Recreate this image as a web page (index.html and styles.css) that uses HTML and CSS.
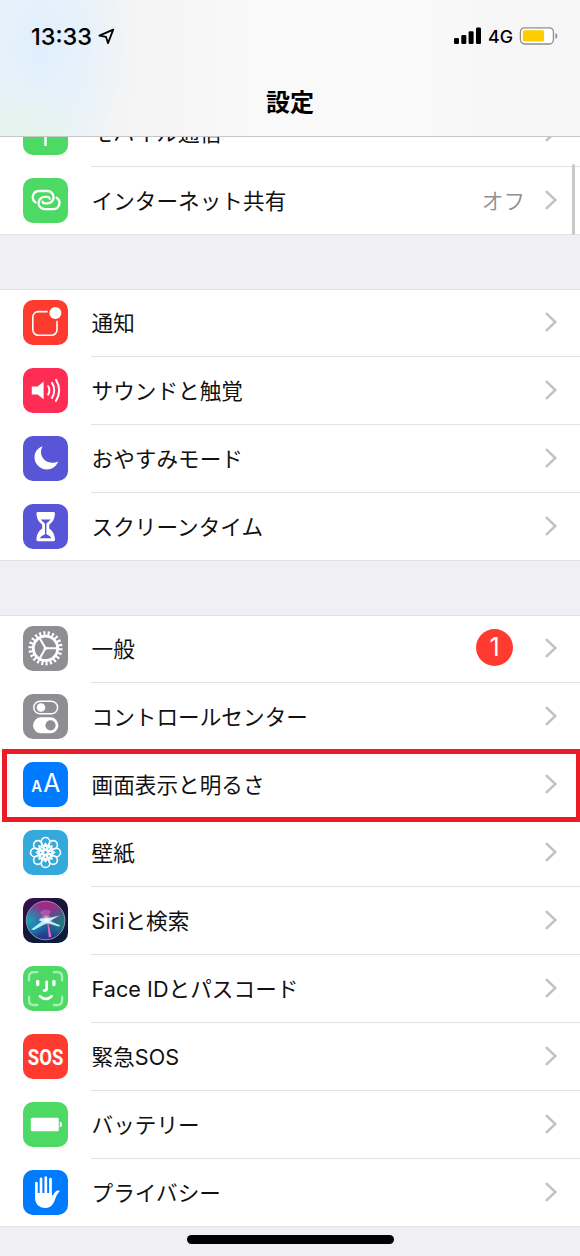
FILE: index.html
```html
<!DOCTYPE html>
<html lang="ja">
<head>
<meta charset="utf-8">
<title>設定</title>
<link rel="stylesheet" href="styles.css">
</head>
<body>
<svg class="defs" width="0" height="0" aria-hidden="true">
  <symbol id="chev" viewBox="0 0 14 22"><path d="M2 2.2 11.3 11 2 19.8" fill="none" stroke="#c2c2c6" stroke-width="2.5"/></symbol>
</svg>
<div class="screen">
  <header class="header">
    <div class="status">
      <div class="clock">
        <span class="time">13:33</span>
        <svg class="loc" width="17" height="17" viewBox="0 0 17 17"><path d="M15.2 1.6 1.4 7.6 8 8.8 10 15.2Z" fill="none" stroke="#000" stroke-width="1.8" stroke-linejoin="round"/></svg>
      </div>
      <div class="signal">
        <svg width="28" height="18" viewBox="0 0 28 18"><rect x="0" y="11" width="5" height="6" rx="1.2"/><rect x="7.3" y="8" width="5" height="9" rx="1.2"/><rect x="14.6" y="4.3" width="5" height="12.7" rx="1.2"/><rect x="22" y=".5" width="5" height="16.5" rx="1.2"/></svg>
        <span class="net">4G</span>
        <svg width="39" height="18" viewBox="0 0 39 18"><rect x="1.4" y=".8" width="33" height="16.2" rx="4.2" fill="#fff" stroke="#8e8e90" stroke-width="1.3"/><rect x="3.8" y="3.2" width="21.3" height="11.4" rx="1.6" fill="#fc0"/><path d="M36.4 5.9q2 1 2 3t-2 3Z" fill="#8e8e90"/></svg>
      </div>
    </div>
    <h1 class="title">設定</h1>
  </header>

  <main class="list">
    <section class="group first">
      <div class="row">
        <svg class="icon" viewBox="0 0 45 45"><rect width="45" height="45" rx="10" fill="#4cd964"/><path d="M22.5 20v16" stroke="#fff" stroke-width="2.4"/></svg>
        <div class="cell"><span class="label">モバイル通信</span><svg class="chev"><use href="#chev"/></svg></div>
      </div>
      <div class="row">
        <svg class="icon" viewBox="0 0 45 45"><rect width="45" height="45" rx="10" fill="#4cd964"/><g fill="none" stroke="#fff" stroke-width="2.3" stroke-linecap="round"><path d="M12.6 24.4A6.2 6.2 0 0 1 16 13H24.4A6.2 6.2 0 0 1 24.4 25.4H22.2Q19.8 25.2 19.6 23.6"/><path d="M33.6 19.8A6.2 6.2 0 0 1 30 31.2H21.8A6.2 6.2 0 0 1 21.8 18.8H24.2Q26.4 19 26.7 20.6"/></g></svg>
        <div class="cell"><span class="label">インターネット共有</span><span class="value">オフ</span><svg class="chev"><use href="#chev"/></svg></div>
      </div>
    </section>

    <section class="group">
      <div class="row">
        <svg class="icon" viewBox="0 0 45 45"><rect width="45" height="45" rx="10" fill="#ff3b30"/><rect x="9.8" y="11.6" width="24.2" height="23.6" rx="5.5" fill="none" stroke="#fff" stroke-width="1.6"/><circle cx="32.4" cy="13" r="8" fill="#ff3b30"/><circle cx="32.4" cy="13" r="6" fill="#fff"/></svg>
        <div class="cell"><span class="label">通知</span><svg class="chev"><use href="#chev"/></svg></div>
      </div>
      <div class="row">
        <svg class="icon" viewBox="0 0 45 45"><rect width="45" height="45" rx="10" fill="#ff2d55"/><path d="M8.8 18.4h5.8L20.6 13.6v17.6L14.6 26.4H8.8Z" fill="#fff"/><g fill="none" stroke="#fff" stroke-width="2" stroke-linecap="round"><path d="M25.2 18.2q2.4 4.2 0 8.4"/><path d="M29 14.8q4.6 7.6 0 15.2"/><path d="M33 11.8q6.4 10.6 0 21.2"/></g></svg>
        <div class="cell"><span class="label">サウンドと触覚</span><svg class="chev"><use href="#chev"/></svg></div>
      </div>
      <div class="row">
        <svg class="icon" viewBox="0 0 45 45"><rect width="45" height="45" rx="10" fill="#5856d6"/><path d="M19.7 10.2C13.8 12.2 11.5 16.8 11.5 21.3 11.5 28 17 33.5 23.8 33.5 29 33.5 33.4 30.4 35.2 25.5 32.8 26.6 30.8 27 28.6 26.7 22.5 26.3 18 21.8 18 16 18 13.8 18.6 12 19.7 10.2Z" fill="#fff"/></svg>
        <div class="cell"><span class="label">おやすみモード</span><svg class="chev"><use href="#chev"/></svg></div>
      </div>
      <div class="row">
        <svg class="icon" viewBox="0 0 45 45"><rect width="45" height="45" rx="10" fill="#5856d6"/><path d="M14.8 8H30.6Q32.2 8 32 9.7C31.6 14.8 29.8 18 26.2 20.7V24.5C29.8 27 31.6 30.2 32 35.5Q32.2 37.2 30.6 37.2H14.8Q13.2 37.2 13.4 35.5C13.8 30.2 15.6 27 19.2 24.5V20.7C15.6 18 13.8 14.8 13.4 9.7Q13.2 8 14.8 8Z" fill="#fff"/><path d="M17.8 15.4H27.6C26.4 17.4 23.4 18.4 23.4 20.4V30.2C25.2 31.3 27.5 31.6 28.4 34.3H17C17.9 31.6 20.2 31.3 22 30.2V20.4C22 18.4 19 17.4 17.8 15.4Z" fill="#5856d6"/></svg>
        <div class="cell"><span class="label">スクリーンタイム</span><svg class="chev"><use href="#chev"/></svg></div>
      </div>
    </section>

    <section class="group">
      <div class="row">
        <svg class="icon" viewBox="0 0 45 45"><rect width="45" height="45" rx="10" fill="#8e8e93"/><circle cx="22.5" cy="22.3" r="15" fill="none" stroke="#fff" stroke-width="4.2" stroke-dasharray="2.2 2.3" pathLength="99"/><circle cx="22.5" cy="22.3" r="12.2" fill="none" stroke="#fff" stroke-width="2.8"/><g stroke="#fff" stroke-width="2"><path d="M22.5 22.3H35M22.5 22.3 16.3 11.5M22.5 22.3 16.3 33.1"/></g><circle cx="22.5" cy="22.3" r="1.8" fill="#fff"/></svg>
        <div class="cell"><span class="label">一般</span><span class="badge">1</span><svg class="chev"><use href="#chev"/></svg></div>
      </div>
      <div class="row">
        <svg class="icon" viewBox="0 0 45 45"><rect width="45" height="45" rx="10" fill="#8e8e93"/><rect x="10.8" y="7.2" width="23.8" height="12.6" rx="6.3" fill="none" stroke="#fff" stroke-width="1.5"/><circle cx="18" cy="13.5" r="4.3" fill="#fff"/><rect x="10" y="23.3" width="25.4" height="16" rx="8" fill="#fff"/><circle cx="27.5" cy="31.3" r="5.1" fill="#8e8e93"/></svg>
        <div class="cell"><span class="label">コントロールセンター</span><svg class="chev"><use href="#chev"/></svg></div>
      </div>
      <div class="row marked">
        <svg class="icon" viewBox="0 0 45 45"><rect width="45" height="45" rx="10" fill="#007aff"/><g class="glyph-aa"><text x="8.3" y="30" font-size="16" font-weight="600" textLength="10.8" lengthAdjust="spacingAndGlyphs">A</text><text x="20.2" y="30" font-size="25" textLength="17" lengthAdjust="spacingAndGlyphs">A</text></g></svg>
        <div class="cell"><span class="label">画面表示と明るさ</span><svg class="chev"><use href="#chev"/></svg></div>
      </div>
      <div class="row">
        <svg class="icon" viewBox="0 0 45 45"><rect width="45" height="45" rx="10" fill="#34aadc"/><g fill="none" stroke="#fff" stroke-width="1.6"><circle cx="22.5" cy="11.8" r="4.3"/><circle cx="30.1" cy="14.9" r="4.3"/><circle cx="33.2" cy="22.5" r="4.3"/><circle cx="30.1" cy="30.1" r="4.3"/><circle cx="22.5" cy="33.2" r="4.3"/><circle cx="14.9" cy="30.1" r="4.3"/><circle cx="11.8" cy="22.5" r="4.3"/><circle cx="14.9" cy="14.9" r="4.3"/><circle cx="22.5" cy="22.5" r="2.2"/><g id="petals"><path d="M22.5 20Q19.2 17 22.5 13.5 25.8 17 22.5 20Z"/><path d="M22.5 25Q19.2 28 22.5 31.5 25.8 28 22.5 25Z"/><path d="M20 22.5Q17 19.2 13.5 22.5 17 25.8 20 22.5Z"/><path d="M25 22.5Q28 19.2 31.5 22.5 28 25.8 25 22.5Z"/></g><use href="#petals" transform="rotate(45 22.5 22.5)"/></g></svg>
        <div class="cell"><span class="label">壁紙</span><svg class="chev"><use href="#chev"/></svg></div>
      </div>
      <div class="row">
        <svg class="icon" viewBox="0 0 45 45">
          <defs>
            <linearGradient id="sbg" x1="0" y1="0" x2=".8" y2="1"><stop offset="0" stop-color="#3d1058"/><stop offset=".5" stop-color="#161536"/><stop offset="1" stop-color="#0e1c3c"/></linearGradient>
            <linearGradient id="orb" x1=".4" y1="0" x2=".5" y2="1"><stop offset="0" stop-color="#b02481"/><stop offset=".45" stop-color="#6a3f96"/><stop offset=".7" stop-color="#205b9f"/><stop offset="1" stop-color="#252f83"/></linearGradient>
            <radialGradient id="teal" cx=".06" cy=".5" r=".48"><stop offset="0" stop-color="#12a6b8"/><stop offset="1" stop-color="#12a6b8" stop-opacity="0"/></radialGradient>
            <radialGradient id="green" cx=".98" cy=".55" r=".46"><stop offset="0" stop-color="#1c8078"/><stop offset="1" stop-color="#1c8078" stop-opacity="0"/></radialGradient>
            <radialGradient id="glow"><stop offset="0" stop-color="#fff"/><stop offset="1" stop-color="#d5edff" stop-opacity="0"/></radialGradient>
          </defs>
          <rect width="45" height="45" rx="10" fill="url(#sbg)"/>
          <circle cx="22.6" cy="22.5" r="19.3" fill="url(#orb)"/><circle cx="22.6" cy="22.5" r="19.3" fill="url(#teal)"/><circle cx="22.6" cy="22.5" r="19.3" fill="url(#green)"/>
          <circle cx="22.6" cy="22.5" r="19.3" fill="none" stroke="#8998ad" stroke-width="1"/>
          <path d="M17 15Q20 9 28 13L24 21Z" fill="#e879ba" opacity=".45"/>
          <path d="M24 19.5 8 31.5 11 32 25 24.5Z" fill="#a8f2fa"/>
          <path d="M24 20 28.4 38.5 25.8 39.5Z" fill="#f16bc9"/>
          <path d="M24 20.5 36.5 17.5 27 23 37.5 27.5 35.5 28.6 24 25 16 22.6 17 20.6Z" fill="#cff9fa" opacity=".9"/>
          <ellipse cx="23.5" cy="22" rx="7" ry="5.5" fill="url(#glow)"/>
        </svg>
        <div class="cell"><span class="label">Siriと検索</span><svg class="chev"><use href="#chev"/></svg></div>
      </div>
      <div class="row">
        <svg class="icon" viewBox="0 0 45 45"><rect width="45" height="45" rx="10" fill="#4cd964"/><path d="M6 14.5V11Q6 6.2 10.8 6.2H14.3M30.8 6.2H34.3Q39.1 6.2 39.1 11V14.5M39.1 30.7V34.2Q39.1 39 34.3 39H30.8M14.3 39H10.8Q6 39 6 34.2V30.7" fill="none" stroke="#a9eeb4" stroke-width="2.3" stroke-linecap="round"/><g fill="none" stroke="#fff" stroke-width="2.7" stroke-linecap="round"><path d="M14.7 15.5v3M30.9 15.5v3" stroke-width="3.4"/><path d="M23.7 15.8v6.6Q23.7 24.6 21 24.6"/><path d="M17 30.2Q22.8 35.4 28.6 30.2"/></g></svg>
        <div class="cell"><span class="label">Face IDとパスコード</span><svg class="chev"><use href="#chev"/></svg></div>
      </div>
      <div class="row">
        <svg class="icon" viewBox="0 0 45 45"><rect width="45" height="45" rx="10" fill="#ff3b30"/><text class="glyph-sos" transform="translate(22.5 30.6) scale(1 1.24)">SOS</text></svg>
        <div class="cell"><span class="label">緊急SOS</span><svg class="chev"><use href="#chev"/></svg></div>
      </div>
      <div class="row">
        <svg class="icon" viewBox="0 0 45 45"><rect width="45" height="45" rx="10" fill="#4cd964"/><rect x="7.8" y="15.7" width="28" height="13.6" rx="1.5" fill="#fff"/><path d="M36.8 19.5q2.2.6 2.2 3t-2.2 3Z" fill="#fff"/></svg>
        <div class="cell"><span class="label">バッテリー</span><svg class="chev"><use href="#chev"/></svg></div>
      </div>
      <div class="row">
        <svg class="icon" viewBox="0 0 45 45"><rect width="45" height="45" rx="10" fill="#007aff"/><g stroke="#fff" stroke-width="2.7" stroke-linecap="round"><path d="M13.4 13.2V28M18 8.8V26M22.8 7.5V25M27.5 9V26"/></g><path d="M12.1 23H28.9V26.2L32.4 21.7Q34.2 20 36.6 20.7 36.8 21.2 35.8 22.2C33.2 25 32.4 29.4 30.5 32.9 28.6 36.3 26 37.9 22.2 37.9 16 37.9 12.1 34 12.1 28Z" fill="#fff"/></svg>
        <div class="cell"><span class="label">プライバシー</span><svg class="chev"><use href="#chev"/></svg></div>
      </div>
    </section>
  </main>
  <div class="scrollbar"></div>
  <div class="home"></div>
</div>
</body>
</html>
```

FILE: styles.css
```css
*, *::after { box-sizing: border-box; }

body {
  margin: 0;
  font-family: Inter, "Noto Sans CJK JP", sans-serif;
  color: #111;
}

.defs { position: absolute; }

.screen {
  position: relative;
  width: 580px;
  height: 1256px;
  overflow: hidden;
  background: #efeff4;
}

.header {
  position: relative;
  z-index: 2;
  height: 137px;
  border-bottom: 1px solid #c6c6c8;
  background:
    radial-gradient(ellipse 100px 70px at 10px 145px, #e5f5e9 0%, rgba(229, 245, 233, 0) 100%),
    radial-gradient(ellipse 95px 140px at 40px 45px, #e0effd 0%, #e7f1fb 45%, rgba(240, 243, 247, 0) 100%),
    linear-gradient(90deg, #e9f2fa 0, #f4f4f4 110px, #f5f5f5 170px, #f9f9f9 250px, #f9f9f9 430px, #f6f6f6 500px, #f7f7f7 100%);
}

.status {
  display: flex;
  justify-content: space-between;
  height: 72px;
  padding: 23px 22px 0 31px;
}

.clock, .signal {
  display: flex;
  align-items: center;
  height: 26px;
  color: #000;
}

.time {
  width: 62px;
  font-size: 23.5px;
  font-weight: 550;
}

.loc { margin-left: 5px; }

.net {
  width: 31px;
  margin-left: 6px;
  font-size: 17.8px;
  font-weight: 450;
}

.title {
  margin: 16px 0 0;
  font-size: 24px;
  line-height: 30px;
  font-weight: 700;
  text-align: center;
  color: #000;
}

.list {
  display: flex;
  flex-direction: column;
  gap: 54px;
  margin-top: -38px;
}

.group {
  background: #fff;
  box-shadow: inset 0 1px 0 #e2e2e6, inset 0 -1px 0 #e2e2e6;
}

.row {
  position: relative;
  display: flex;
  align-items: flex-start;
  height: 68px;
  padding-left: 23px;
}

.icon {
  flex: none;
  width: 45px;
  height: 45px;
  margin-top: 10.6px;
}

.cell {
  flex: 1;
  display: flex;
  align-items: center;
  height: 68px;
  margin-left: 23px;
  padding-right: 22px;
  border-bottom: 1px solid #e2e2e4;
}

.row:last-child .cell { border-bottom-color: transparent; }

.label {
  flex: 1;
  padding-left: 0.5px;
  font-size: 21.6px;
  line-height: 32px;
  letter-spacing: 0.05px;
  font-weight: 390;
  white-space: nowrap;
}

.value {
  margin-right: 19px;
  font-size: 21.6px;
  line-height: 32px;
  font-weight: 350;
  color: #8e8e93;
}

.chev {
  flex: none;
  width: 14px;
  height: 22px;
  margin-bottom: 1px;
}

.badge {
  width: 37px;
  height: 37px;
  margin: 0 31px 2px 0;
  border-radius: 50%;
  background: #ff3b30;
  color: #fff;
  font-size: 25px;
  line-height: 37px;
  text-align: center;
}

.marked::after {
  content: "";
  position: absolute;
  left: 2px;
  top: -2px;
  width: 579px;
  height: 73px;
  border: 5px solid #ed1c24;
  z-index: 1;
}

/* The separator under the highlighted row is covered by its frame. */
.marked .cell { border-bottom-color: transparent; }

.glyph-aa { fill: #fff; }

.glyph-sos {
  fill: #fff;
  font-family: Roboto, sans-serif;
  font-size: 18.5px;
  font-weight: 700;
  text-anchor: middle;
}

.scrollbar {
  position: absolute;
  right: 5px;
  top: 164px;
  width: 3px;
  height: 71px;
  border-radius: 2px;
  background: #c8c8c9;
}

.home {
  position: absolute;
  left: 187px;
  top: 1235px;
  width: 207px;
  height: 9px;
  border-radius: 5px;
  background: #000;
}
```
